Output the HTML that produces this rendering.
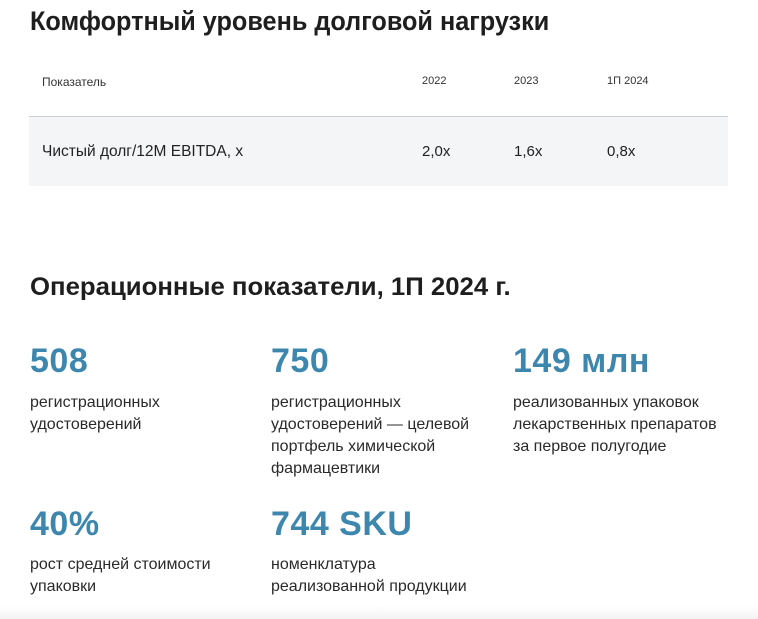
<html><head><style>
body{margin:0;width:758px;height:619px;background:#fff;font-family:"Liberation Sans",sans-serif;color:#222;position:relative;overflow:hidden}
.a{position:absolute;white-space:nowrap}
h1,h2{margin:0;font-weight:bold;color:#1e1e1e}
.num{position:absolute;color:#3d86ae;font-size:34px;font-weight:bold;letter-spacing:0.5px;white-space:nowrap}
.d{position:absolute;font-size:16px;line-height:22px;color:#2a2a2a;white-space:nowrap}
</style></head><body>
<h1 class="a" style="left:30px;top:6px;font-size:27px;transform:scaleX(.935);transform-origin:0 0">Комфортный уровень долговой нагрузки</h1>
<div class="a" style="left:42px;top:75px;font-size:12px;color:#333">Показатель</div>
<div class="a" style="left:422px;top:75px;font-size:11px;color:#333">2022</div>
<div class="a" style="left:514px;top:75px;font-size:11px;color:#333">2023</div>
<div class="a" style="left:607px;top:75px;font-size:11px;color:#333">1П 2024</div>
<div class="a" style="left:29px;top:116px;width:699px;height:1px;background:#cfd1d6"></div>
<div class="a" style="left:29px;top:117px;width:699px;height:69px;background:#f4f5f7"></div>
<div class="a" style="left:42px;top:143px;font-size:15.5px">Чистый долг/12M EBITDA, x</div>
<div class="a" style="left:422px;top:143px;font-size:15px">2,0x</div>
<div class="a" style="left:514px;top:143px;font-size:15px">1,6x</div>
<div class="a" style="left:607px;top:143px;font-size:15px">0,8x</div>
<h2 class="a" style="left:30px;top:273px;font-size:25px;transform:scaleX(1.03);transform-origin:0 0">Операционные показатели, 1П 2024 г.</h2>
<div class="num" style="left:30px;top:342px">508</div>
<div class="num" style="left:271px;top:342px">750</div>
<div class="num" style="left:513px;top:342px">149 млн</div>
<div class="d" style="left:30px;top:392px">регистрационных<br>удостоверений</div>
<div class="d" style="left:271px;top:392px">регистрационных<br>удостоверений — целевой<br>портфель химической<br>фармацевтики</div>
<div class="d" style="left:513px;top:392px">реализованных упаковок<br>лекарственных препаратов<br>за первое полугодие</div>
<div class="num" style="left:30px;top:505px">40%</div>
<div class="num" style="left:271px;top:505px">744 SKU</div>
<div class="d" style="left:30px;top:554px">рост средней стоимости<br>упаковки</div>
<div class="d" style="left:271px;top:554px">номенклатура<br>реализованной продукции</div>
<div class="a" style="left:0;top:606px;width:758px;height:13px;background:linear-gradient(#fff,#f3f3f3)"></div>
</body></html>
